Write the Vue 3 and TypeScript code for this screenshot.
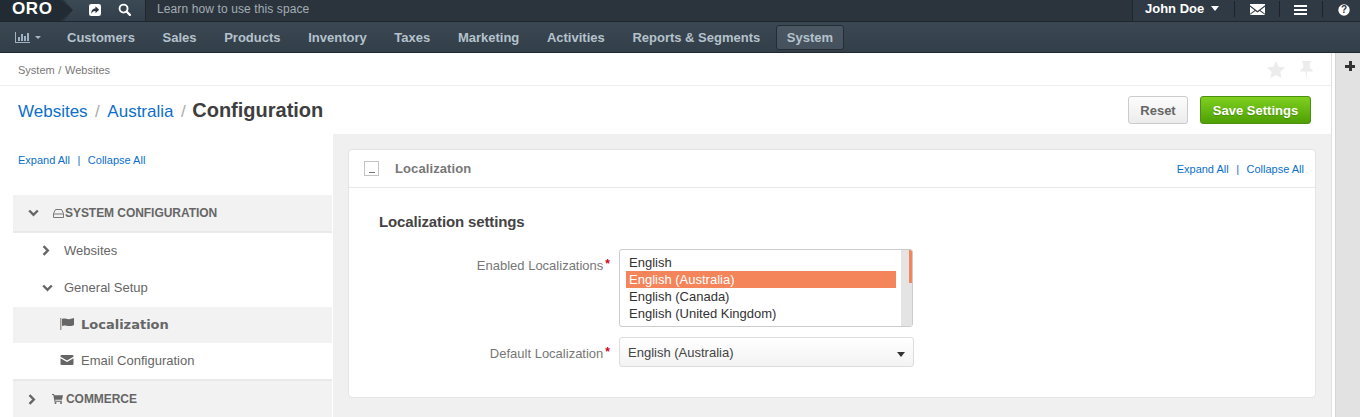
<script setup lang="ts">
const navItems: string[] = ['Customers', 'Sales', 'Products', 'Inventory', 'Taxes', 'Marketing', 'Activities', 'Reports & Segments']
const options: string[] = ['English', 'English (Australia)', 'English (Canada)', 'English (United Kingdom)']
</script>

<template>
  <div class="page">
    <header class="topbar">
      <div class="logo">ORO</div>
      <div class="quick">
        <svg class="qi" width="12" height="12" viewBox="0 0 13 13"><rect x="0" y="0" width="13" height="13" rx="2.500" fill="#fff"/><path d="M2.500 10.500c0-4 2-5.500 4.500-5.500V2.500l4 3.700-4 3.800V7.500c-2 0-3.400.8-4.500 3z" fill="#2b343d"/></svg>
        <svg class="qi" width="13" height="13" viewBox="0 0 14 14"><circle cx="6" cy="6" r="4.300" fill="none" stroke="#fff" stroke-width="2"/><path d="M9.200 9.200l3.600 3.600" stroke="#fff" stroke-width="2.400" stroke-linecap="round"/></svg>
      </div>
      <div class="learn">Learn how to use this space</div>
      <div class="user">John Doe <span class="caret"></span></div>
      <div class="tool mail">
        <svg width="15" height="11" viewBox="0 0 15 11"><path d="M0 1.200V0h15v1.200L7.500 7z" fill="#fff"/><path d="M0 2.800l4.600 3.500L0 9.800zM15 2.800l-4.600 3.500L15 9.800zM0 11v-.2l5.400-3.900 2.100 1.600 2.100-1.600 5.400 3.900v.2z" fill="#fff"/></svg>
      </div>
      <div class="tool menu">
        <svg width="13" height="10" viewBox="0 0 13 10"><path d="M0 0h13v2H0zM0 4h13v2H0zM0 8h13v2H0z" fill="#fff"/></svg>
      </div>
      <div class="tool help">
        <svg width="12" height="12" viewBox="0 0 12 12"><circle cx="6" cy="6" r="5.700" fill="#fff"/><text x="6" y="9.300" text-anchor="middle" class="q">?</text></svg>
      </div>
    </header>

    <nav class="navbar">
      <div class="chart">
        <svg width="15" height="11" viewBox="0 0 15 11"><path d="M0 0h1v10h14v1H0zM3 5h2v4H3zM6 2h2v7H6zM9 4h2v5H9zM12 1h2v8h-2z" fill="#9fb2c4"/></svg>
        <span class="caret small"></span>
      </div>
      <a v-for="item in navItems" :key="item" class="nav-item">{{ item }}</a>
      <a class="nav-item active">System</a>
    </nav>

    <div class="body">
      <main class="main">
        <div class="crumbs">
          <span class="crumb-text">System / Websites</span>
          <div class="crumb-icons">
            <svg width="18" height="17" viewBox="0 0 18 17"><path d="M9 0l2.700 5.700 6.300.8-4.600 4.300 1.200 6.200L9 14l-5.600 3 1.200-6.200L0 6.500l6.300-.8z" fill="#ececec"/></svg>
            <svg width="13" height="18" viewBox="0 0 13 18"><path d="M2 0h9v1.500H9.800V7c1.800.8 3 2 3 3.500H7.300L6.500 18l-.8-7.500H.2C.2 9 1.400 7.800 3.200 7V1.500H2z" fill="#ececec"/></svg>
          </div>
        </div>
        <div class="titlebar">
          <h1 class="title">
            <a>Websites</a><i>/</i><a>Australia</a><i>/</i><b>Configuration</b>
          </h1>
          <div class="actions">
            <button class="btn reset">Reset</button>
            <button class="btn save">Save Settings</button>
          </div>
        </div>
        <div class="content">
          <aside class="side">
            <div class="links side-links"><a>Expand All</a><span>|</span><a>Collapse All</a></div>
            <div class="tree">
              <div class="group">
                <svg class="chev down g" width="11" height="8" viewBox="0 0 11 8"><path d="M1.200 1.500l4.300 4.300 4.300-4.300" fill="none" stroke="#666" stroke-width="2.400"/></svg>
                <svg class="gi" width="11" height="9" viewBox="0 0 11 9"><path d="M.5 8.500v-4l2-4h6l2 4v4zM.5 5h10" fill="none" stroke="#777" stroke-width="1"/></svg>
                <span>SYSTEM CONFIGURATION</span>
              </div>
              <div class="row lvl1">
                <svg class="chev" width="8" height="11" viewBox="0 0 8 11" preserveAspectRatio="xMinYMid"><path d="M1.500 1.200l4.300 4.300-4.300 4.300" fill="none" stroke="#666" stroke-width="2.400"/></svg>
                <span>Websites</span>
              </div>
              <div class="row lvl1">
                <svg class="chev" width="11" height="8" viewBox="0 0 11 8"><path d="M1.200 1.500l4.300 4.300 4.300-4.300" fill="none" stroke="#666" stroke-width="2.400"/></svg>
                <span class="gs">General Setup</span>
              </div>
              <div class="row lvl2 current">
                <svg width="14" height="12" viewBox="0 0 14 12"><path d="M0 0h1.500v12H0z" fill="#a09a90"/><path d="M2 1c3-1.500 5 1 8 0 1.500-.3 3-.5 4-1v7c-1 .8-2.500 1-4 1-3 .5-5-1.500-8 0z" fill="#666"/></svg>
                <span>Localization</span>
              </div>
              <div class="row lvl2 last">
                <svg width="13" height="10" viewBox="0 0 13 10"><path d="M0 1a1 1 0 011-1h11a1 1 0 011 1v.8L6.500 5.500 0 1.800zM0 3.300l6.500 3.700L13 3.300V9a1 1 0 01-1 1H1a1 1 0 01-1-1z" fill="#666"/></svg>
                <span>Email Configuration</span>
              </div>
              <div class="group commerce">
                <svg class="chev g" width="8" height="11" viewBox="0 0 8 11"><path d="M1.500 1.200l4.300 4.300-4.300 4.300" fill="none" stroke="#666" stroke-width="2.400"/></svg>
                <svg class="gi" width="11" height="10" viewBox="0 0 11 10"><path d="M0 0h2l.4 1.200H11L10 5.700H3.200l.2 1H10v1H2.500L1.300 1H0z" fill="#666"/><circle cx="3.500" cy="9" r="1" fill="#666"/><circle cx="9" cy="9" r="1" fill="#666"/></svg>
                <span>COMMERCE</span>
              </div>
            </div>
          </aside>
          <section class="area">
            <div class="panel">
              <div class="panel-head">
                <span class="toggle"><span></span></span>
                <span class="panel-title">Localization</span>
                <div class="links"><a>Expand All</a><span>|</span><a>Collapse All</a></div>
              </div>
              <div class="panel-body">
                <h2>Localization settings</h2>
                <div class="field">
                  <label>Enabled Localizations<em>*</em></label>
                  <div class="listbox">
                    <div class="opts">
                      <div v-for="(o, i) in options" :key="o" class="opt" :class="{ sel: i === 1 }">{{ o }}</div>
                    </div>
                    <div class="scroll"><span></span></div>
                  </div>
                </div>
                <div class="field second">
                  <label>Default Localization<em>*</em></label>
                  <div class="select">English (Australia)<span class="caret dark"></span></div>
                </div>
              </div>
            </div>
          </section>
        </div>
      </main>
      <aside class="rail"><span class="plus"></span></aside>
    </div>
  </div>
</template>

<style>
html, body { margin: 0; padding: 0; background: #fff; overflow: hidden; }
</style>

<style scoped>
* { box-sizing: border-box; }
.page { width: 1360px; height: 417px; overflow: hidden; font: 13px "Liberation Sans", Arial, sans-serif; color: #666; display: flex; flex-direction: column; }
a { color: #0c6fcb; }

.topbar { height: 22px; flex: none; background: #2b343d; border-bottom: 1px solid #1f272e; display: flex; align-items: center; color: #fff; }
.logo { width: 73px; height: 21px; background: #222b33; font-weight: 700; font-size: 17px; padding-left: 12px; line-height: 18px; letter-spacing: .6px; clip-path: polygon(0 0, 60px 0, 73px 10px, 60px 21px, 0 21px); flex: none; }
.quick { margin-left: -9px; width: 82px; height: 21px; background: linear-gradient(#3b4955, #33404b); display: flex; align-items: center; border-right: 1px solid #1f272e; clip-path: polygon(0 0, 100% 0, 100% 100%, 0 100%, 9px 10px); padding-left: 25px; flex: none; gap: 17px; }
.qi { margin-top: -2px; flex: none; }
.learn { flex: 1; padding-left: 11px; font-size: 12px; letter-spacing: .11px; color: #a4adb4; margin-top: -3px; }
.user { width: 102px; height: 21px; border-left: 1px solid #1f272e; padding-left: 12px; font-weight: 700; font-size: 13px; line-height: 18px; flex: none; white-space: nowrap; background: #303a44; }
.caret { display: inline-block; width: 0; height: 0; border-left: 4.500px solid transparent; border-right: 4.500px solid transparent; border-top: 5px solid #fff; vertical-align: 2px; margin-left: 3px; }
.tool { height: 21px; flex: none; display: flex; align-items: center; justify-content: center; background: #303a44; position: relative; }
.tool::before { content: ""; position: absolute; left: 0; top: 1px; height: 16px; width: 1px; background: #1c2329; }
.tool svg { margin-top: -2px; }
.mail { width: 45px; padding-left: 1px; }
.menu { width: 43px; }
.help { width: 38px; padding-left: 5px; }
.q { font: 700 10px "Liberation Sans", sans-serif; fill: #2b343d; }

.navbar { height: 31px; flex: none; background: linear-gradient(#3b4853, #323e48); border-bottom: 1px solid #20292f; display: flex; align-items: center; padding-left: 15px; padding-top: 1px; }
.chart { display: flex; align-items: center; width: 52px; flex: none; }
.caret.small { border-left-width: 3px; border-right-width: 3px; border-top: 3px solid #a9b8c4; margin-left: 5px; vertical-align: 0; }
.nav-item { color: #b5c2cc; font-weight: 700; font-size: 13px; margin-right: 27.650px; white-space: nowrap; }
.nav-item.active { margin-left: -12px; height: 25px; width: 68px; line-height: 23px; text-align: center; border-radius: 3px; background: linear-gradient(#4a5763, #45525e); border: 1px solid #252d34; margin-right: 0; margin-top: -1px; }

.body { flex: 1; display: flex; min-height: 0; }
.main { width: 1332px; flex: none; display: flex; flex-direction: column; min-height: 0; border-right: 1px solid #e0e0e0; }
.rail { flex: 1; margin-left: 3px; background: #e2e2e2; border-left: 1px solid #d5d5d5; position: relative; }
.plus { position: absolute; left: 9px; top: 8px; width: 10px; height: 10px; background: linear-gradient(#333, #333) center/10px 3px no-repeat, linear-gradient(#333, #333) center/3px 10px no-repeat; }

.crumbs { height: 33px; flex: none; border-bottom: 1px solid #efefef; display: flex; align-items: center; justify-content: space-between; padding: 1px 18px 0 18px; font-size: 11px; color: #777; }
.crumb-text { word-spacing: .6px; }
.crumb-icons { display: flex; gap: 15px; align-items: center; }
.titlebar { height: 48px; flex: none; display: flex; align-items: center; justify-content: space-between; padding: 0 20px 0 18px; }
.title { margin: 0; font-weight: 400; font-size: 17px; display: flex; align-items: baseline; }
.title i { font-style: normal; color: #aaa; margin: 0 7.500px; }
.title b { font-size: 20px; color: #3e3e3e; font-weight: 700; margin-left: -1px; }
.actions { display: flex; gap: 12px; }
.btn { height: 28px; border-radius: 3px; font: 700 13px "Liberation Sans", sans-serif; padding: 0; }
.reset { width: 60px; border: 1px solid #ccc; background: linear-gradient(#fcfcfc, #ececec); color: #666; }
.save { width: 111px; border: 1px solid #4a8f0e; background: linear-gradient(#7fd01f, #4ea004); color: #fff; text-shadow: 0 1px 1px rgba(0,0,0,.2); }

.content { flex: 1; display: flex; min-height: 0; }
.side { width: 333px; flex: none; padding-left: 13px; padding-right: 1px; background: #fff; }
.links { font-size: 11px; color: #0c6fcb; display: flex; white-space: nowrap; }
.links span { margin: 0 7.500px; color: #0c6fcb; }
.side-links { padding: 20px 0 0 5px; height: 61px; }
.group { height: 38px; background: #f2f2f2; display: flex; align-items: center; font-weight: 700; font-size: 12px; color: #666; border-bottom: 2px solid #e9e9e9; letter-spacing: -.05px; }
.g { margin-left: 15px; flex: none; }
.chev { flex: none; }
.group .gi { margin-left: 14px; margin-right: 1px; }
.group .down { margin-left: 15px; }
.group.commerce { border-bottom: 0; border-top: 2px solid #e9e9e9; height: 38px; }
.commerce .gi { margin-left: 16px; margin-right: 3px; }
.row { height: 37px; display: flex; align-items: center; font-size: 13px; color: #666; padding-bottom: 2px; }
.lvl1 { padding-left: 29px; }
.lvl1 .chev { width: 11px; }
.lvl1 span { margin-left: 11px; }
.lvl2 { padding-left: 47px; height: 36px; }
.lvl2 svg { width: 14px; flex: none; }
.lvl2 span { margin-left: 7px; }
.current { background: #f2f2f2; font-family: "DejaVu Sans", sans-serif; font-weight: 700; }
.last { height: 36px; }

.area { flex: 1; background: #f0f0f0; padding: 15px 15px 0 15px; min-width: 0; }
.panel { height: 249px; background: #fff; border: 1px solid #e4e4e4; border-radius: 4px; }
.panel-head { height: 38px; display: flex; align-items: center; padding: 0 11px 0 15px; border-bottom: 1px solid #e8e8e8; }
.toggle { width: 15px; height: 15px; border: 1px solid #c4c4c4; position: relative; flex: none; }
.toggle span { position: absolute; left: 4px; bottom: 2px; width: 6px; height: 1px; background: #777; }
.panel-title { margin-left: 16px; font-weight: 700; font-size: 13px; color: #777; flex: 1; letter-spacing: .1px; }
.panel-body { padding: 25px 0 0 30px; }
h2 { margin: 0 0 18px; font-size: 15px; font-weight: 700; color: #444; line-height: 18px; letter-spacing: -.14px; }
.field { display: flex; align-items: flex-start; }
.field label { width: 240px; flex: none; text-align: right; padding-right: 9px; font-size: 13px; color: #777; padding-top: 9px; line-height: 16px; white-space: nowrap; }
.field em { color: #d0021b; font-style: normal; font-weight: 700; margin-left: 2px; position: relative; top: -2px; font-size: 12px; }
.listbox { width: 294px; height: 78px; border: 1px solid #ccc; border-radius: 3px; display: flex; overflow: hidden; background: #fff; }
.opts { flex: 1; padding: 4px 5px 0 6px; }
.opt { height: 17px; line-height: 17px; padding-left: 3px; font-size: 13px; color: #333; white-space: nowrap; }
.opt.sel { background: #f4845a; color: #fff; }
.scroll { width: 11px; flex: none; background: #e4e4e4; position: relative; }
.scroll span { position: absolute; right: 0; top: 0; width: 3px; height: 33px; background: #f4845a; }
.second { margin-top: 10px; }
.select { width: 295px; height: 30px; border: 1px solid #ddd; border-radius: 3px; background: linear-gradient(#fff, #f3f3f3); line-height: 30px; padding-left: 8px; font-size: 13px; color: #444; position: relative; }
.caret.dark { position: absolute; right: 8px; top: 14px; border-top-color: #333; margin: 0; }
</style>
